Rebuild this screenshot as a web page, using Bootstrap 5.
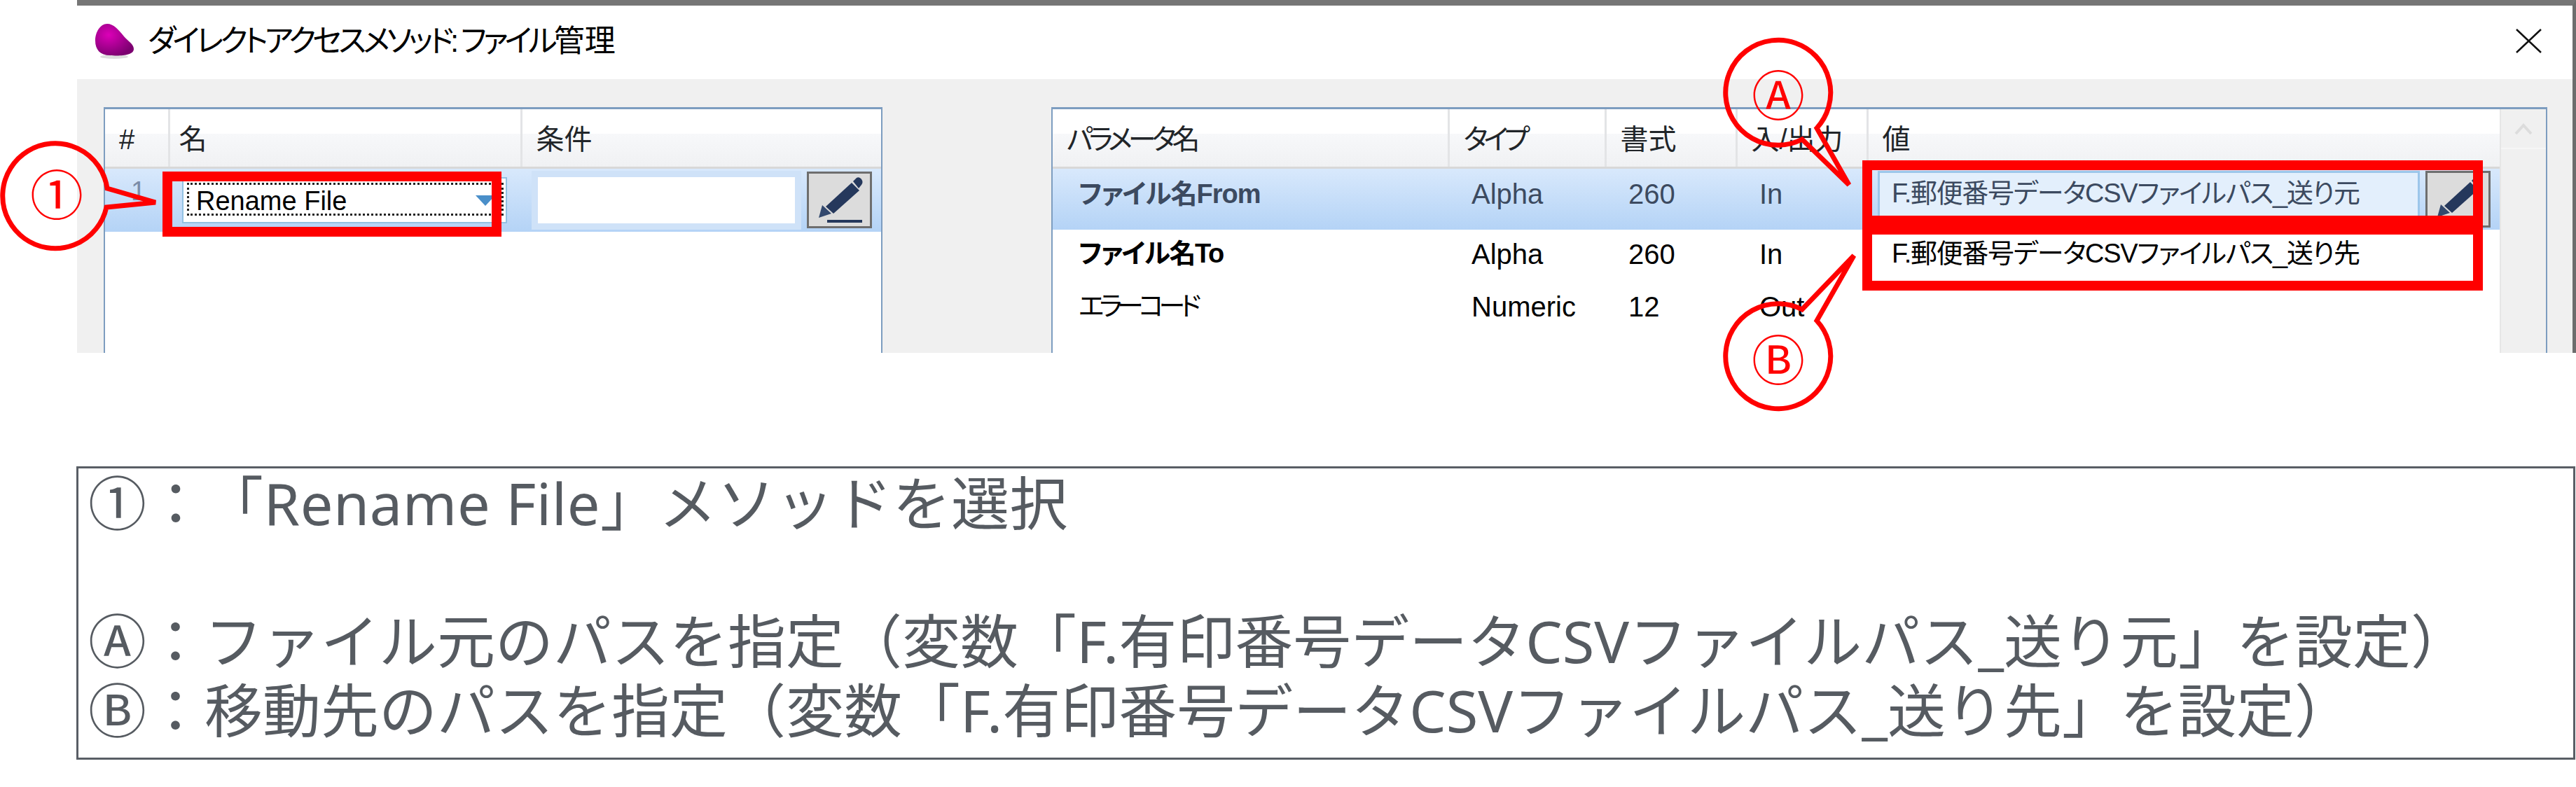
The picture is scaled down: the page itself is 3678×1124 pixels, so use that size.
<!DOCTYPE html>
<html lang="ja">
<head>
	<meta charset="UTF-8">
	<title>ダイレクトアクセスメソッド: ファイル管理</title>
	<link href="https://cdn.jsdelivr.net/npm/bootstrap@5.3.0/dist/css/bootstrap.min.css" rel="stylesheet">
	<style>
		body { background: #fff; font-family: "Liberation Sans", "Noto Sans CJK JP", sans-serif; color: #000; text-spacing-trim: space-all; }
		.sheet { position: relative; width: 3678px; height: 1124px; overflow: hidden; }
		.dlg { margin-left: 110px; border-top: 8px solid #767676; border-right: 5px solid #6d6d6d; }
		.dlg-title { height: 105px; padding: 0 44px 4px 25px; font-size: 44px; font-feature-settings: "palt"; }
		.dlg-title .blob-icon { margin-right: 19px; }
		.title-kana { letter-spacing: -4.85px; }
		.close-x { width: 37px; height: 35px; }
		.dlg-body { height: 391px; background: #f0f0f0; padding: 40px 0 0 38px; gap: 241px; }
		.pane { height: 351px; background: #fff; border: solid #7d9dc0; border-width: 3px 2px 0 2px; overflow: hidden; }
		.pane-left { width: 1112px; }
		.pane-right { width: 2136px; }
		.grid-tbl { table-layout: fixed; margin: 0; --bs-table-bg: transparent; font-size: 38px; font-feature-settings: "palt"; }
		.grid-tbl th, .grid-tbl td { padding: 0; border: 0; vertical-align: middle; font-weight: 400; white-space: nowrap; }
		.grid-tbl thead tr { height: 83px; background: linear-gradient(#fff 0, #fff 42%, #f7f8fa 42%, #f0f1f3 100%); }
		.grid-tbl thead th { border-right: 3px solid #e3e4e6; border-bottom: 3px solid #d8d8d8; padding: 5px 0 0 20px; font-size: 40px; }
		.grid-tbl thead th:last-child { border-right: 0; }
		.grid-tbl thead th.kana-head { letter-spacing: -6px; }
		.grid-tbl thead th.name-head { padding-left: 13px; }
		.row-sel { height: 89px; background: linear-gradient(#d9e9fc, #b4d3f6); }
		.row-sel td { color: #3c4a60; }
		.row-plain { height: 75px; }
		.row-plain td { color: #000; padding-bottom: 6px; }
		.grid-tbl td.cell-txt { padding-left: 33px; font-size: 40px; }
		.grid-tbl td.param-name { padding-left: 37px; letter-spacing: -1.5px; }
		.grid-tbl td.param-from { letter-spacing: -1px; }
		.grid-tbl td.param-kana { letter-spacing: -7px; }
		.row-sel td.cell-txt, .row-sel td.param-name { padding-bottom: 14px; }
		.grid-tbl td.num-cell { color: #7b8ca8; padding-left: 37px; padding-bottom: 24px; }
		.pane-left .row-sel { height: 92px; }
		.combo { width: 464px; height: 66px; margin-left: 19px; background: #fff; border: 2px solid #93c1e2; padding: 6px 3px 9px 5px; }
		.combo-in { height: 100%; border: 3px dotted #222; padding-left: 10px; padding-top: 5px; color: #000; font-size: 38px; line-height: 40px; }
		.combo-arrow { width: 0; height: 0; border-left: 14px solid transparent; border-right: 14px solid transparent; border-top: 15px solid #4a8fc9; margin-right: 9px; }
		.cell-input { width: 385px; height: 84px; margin-left: 15px; background: #fff; border: 9px solid #cfe2f8; }
		.pen-btn { width: 93px; height: 81px; background: #dcdcdc; border: 3px solid #6e6e6e; border-radius: 0; padding: 0; flex-shrink: 0; }
		.pen-btn svg { display: block; }
		.value-input { width: 774px; height: 80px; margin-left: 15px; background: #e3effc; border: 3px solid #9cc6ea; padding-left: 17px; color: #3c4a60; line-height: 58px; flex-shrink: 0; letter-spacing: -1.3px; }
		.grid-tbl td.value-plain { padding-left: 35px; letter-spacing: -1.3px; }
		.scroll-col { width: 66px; background: #f0f0f0; border-left: 2px solid #e6e6e6; flex-shrink: 0; }
		.scroll-up { height: 57px; border-bottom: 2px solid #f6f6f6; }
		.note-box { margin: 162px 0 0 109px; width: 3568px; height: 419px; border: 3px solid #595e65; padding: 0 14px; color: #565b61; font-size: 83px; line-height: 98.5px; font-family: "Noto Sans", "Noto Sans CJK JP", sans-serif; white-space: nowrap; }
		.note-first { letter-spacing: .5px; }
		.marks { position: absolute; left: 0; top: 0; pointer-events: none; }
		.marks text { font-family: "Noto Sans CJK JP", sans-serif; font-size: 76px; fill: #f00; text-anchor: middle; }
	</style>
</head>
<body>
	<svg width="0" height="0" class="d-block">
		<defs>
			<symbol id="pen" viewBox="0 0 87 75">
				<path d="M14 63 L19 45 L32 57 Z" fill="#33496e"/>
				<path d="M24 47 L61 13 L72 24 L35 57 Z" fill="#25385c"/>
				<path d="M63 11 L68 6 Q72 4 75 8 Q78 12 75 16 L71 21 Z" fill="#25385c"/>
				<rect x="26" y="66" width="50" height="4" fill="#25385c"/>
			</symbol>
			<radialGradient id="blob" cx="35%" cy="35%" r="70%">
				<stop offset="0" stop-color="#dc00b8"/>
				<stop offset="1" stop-color="#7c0070"/>
			</radialGradient>
		</defs>
	</svg>

	<div class="sheet">
		<div class="dlg">
			<div class="dlg-title d-flex align-items-center">
				<svg class="blob-icon" width="57" height="52" viewBox="0 0 57 52">
					<ellipse cx="28" cy="48" rx="20" ry="3" fill="#ddd"/>
					<path d="M18 1 C8 1 1 13 1 25 C1 38 8 46 22 46 C34 47 56 47 56 37 C56 30 48 26 42 19 C34 9 27 1 18 1 Z" fill="url(#blob)"/>
				</svg>
				<span class="flex-grow-1"><span class="title-kana">ダイレクトアクセスメソッド: ファイル</span>管理</span>
				<svg class="close-x" viewBox="0 0 37 35"><path d="M1 1 L36 34 M36 1 L1 34" stroke="#111" stroke-width="2.5" fill="none"/></svg>
			</div>

			<div class="dlg-body d-flex">
				<!-- 左: メソッド一覧 -->
				<div class="pane pane-left">
					<table class="table grid-tbl">
						<colgroup><col style="width:91px"><col style="width:503px"><col></colgroup>
						<thead>
							<tr><th>#</th><th class="name-head">名</th><th>条件</th></tr>
						</thead>
						<tbody>
							<tr class="row-sel">
								<td class="num-cell">1</td>
								<td>
									<div class="combo">
										<div class="combo-in d-flex align-items-center justify-content-between">
											<span>Rename File</span><span class="combo-arrow"></span>
										</div>
									</div>
								</td>
								<td>
									<div class="d-flex align-items-center">
										<div class="cell-input"></div>
										<button class="btn pen-btn ms-2" type="button"><svg width="87" height="75"><use href="#pen"/></svg></button>
									</div>
								</td>
							</tr>
						</tbody>
					</table>
				</div>

				<!-- 右: パラメータ -->
				<div class="pane pane-right d-flex">
					<table class="table grid-tbl flex-grow-1 align-self-start">
						<colgroup><col style="width:565px"><col style="width:224px"><col style="width:187px"><col style="width:187px"><col></colgroup>
						<thead>
							<tr><th class="kana-head">パラメータ名</th><th class="kana-head">タイプ</th><th>書式</th><th>入/出力</th><th>値</th></tr>
						</thead>
						<tbody>
							<tr class="row-sel">
								<td class="param-name param-from fw-bold">ファイル名From</td>
								<td class="cell-txt">Alpha</td>
								<td class="cell-txt">260</td>
								<td class="cell-txt">In</td>
								<td>
									<div class="d-flex align-items-center">
										<div class="value-input">F.郵便番号データCSVファイルパス_送り元</div>
										<button class="btn pen-btn ms-2" type="button"><svg width="87" height="75"><use href="#pen"/></svg></button>
									</div>
								</td>
							</tr>
							<tr class="row-plain">
								<td class="param-name fw-bold">ファイル名To</td>
								<td class="cell-txt">Alpha</td>
								<td class="cell-txt">260</td>
								<td class="cell-txt">In</td>
								<td class="value-plain">F.郵便番号データCSVファイルパス_送り先</td>
							</tr>
							<tr class="row-plain">
								<td class="param-name param-kana">エラーコード</td>
								<td class="cell-txt">Numeric</td>
								<td class="cell-txt">12</td>
								<td class="cell-txt">Out</td>
								<td></td>
							</tr>
						</tbody>
					</table>
					<div class="scroll-col">
						<div class="scroll-up d-flex align-items-center justify-content-center">
							<svg width="26" height="18" viewBox="0 0 26 18"><path d="M2 16 L13 4 L24 16" stroke="#dcdcdc" stroke-width="4" fill="none"/></svg>
						</div>
					</div>
				</div>
			</div>
		</div>

		<div class="note-box">
			<div class="note-first">①：「Rename File」メソッドを選択</div>
			<div>&nbsp;</div>
			<div>Ⓐ：ファイル元のパスを指定（変数「F.有印番号データCSVファイルパス_送り元」を設定）</div>
			<div>Ⓑ：移動先のパスを指定（変数「F.有印番号データCSVファイルパス_送り先」を設定）</div>
		</div>

		<!-- 赤枠と吹き出し -->
		<svg class="marks" width="3678" height="1124" viewBox="0 0 3678 1124">
			<g fill="none" stroke="#f00" stroke-width="14">
				<rect x="239" y="252" width="470" height="79"/>
				<rect x="2666" y="236" width="872" height="79"/>
				<rect x="2666" y="328" width="872" height="80"/>
			</g>
			<g fill="none" stroke="#f00" stroke-width="7" stroke-linejoin="miter">
				<path d="M153 269 A75 75 0 1 0 152 296 L222 289 Z"/>
				<path d="M2573 199 A75 75 0 1 1 2594 183 L2640 264 Z"/>
				<path d="M2573 442 A75 75 0 1 0 2594 458 L2647 365 Z"/>
			</g>
			<text x="81" y="307">①</text>
			<text x="2539" y="165">Ⓐ</text>
			<text x="2539" y="543">Ⓑ</text>
		</svg>
	</div>

	<script src="https://cdn.jsdelivr.net/npm/bootstrap@5.3.0/dist/js/bootstrap.bundle.min.js"></script>
</body>
</html>
